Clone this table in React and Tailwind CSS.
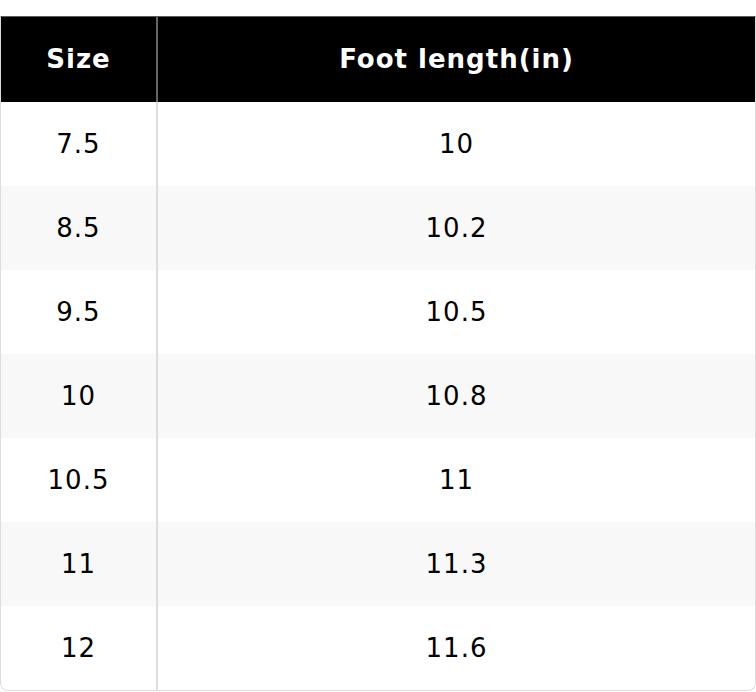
const rows = [
  ["7.5", "10"],
  ["8.5", "10.2"],
  ["9.5", "10.5"],
  ["10", "10.8"],
  ["10.5", "11"],
  ["11", "11.3"],
  ["12", "11.6"],
];

export default function App() {
  return (
    <div className="bg-white pt-4 w-[756px] h-[692px]" style={{ fontFamily: '"DejaVu Sans", sans-serif' }}>
      <div className="border border-[#dcdcdc] border-t-[#5a5a5a] rounded-b-lg text-[26px] tracking-[1px] text-black">
        {/* Header */}
        <div className="flex h-[85px] bg-black text-white font-bold">
          <div className="w-[157px] flex items-center justify-center border-r-2 border-[#666]">Size</div>
          <div className="flex-1 flex items-center justify-center">Foot length(in)</div>
        </div>

        {rows.map(([size, len], i) => (
          <div
            key={size}
            className={`flex h-[84px] ${i % 2 === 1 ? "bg-[#f8f8f8]" : "bg-white"} ${i === rows.length - 1 ? "rounded-b-lg" : ""}`}
          >
            <div className="w-[157px] flex items-center justify-center border-r-2 border-[#dedede]">{size}</div>
            <div className="flex-1 flex items-center justify-center">{len}</div>
          </div>
        ))}
      </div>
    </div>
  );
}
